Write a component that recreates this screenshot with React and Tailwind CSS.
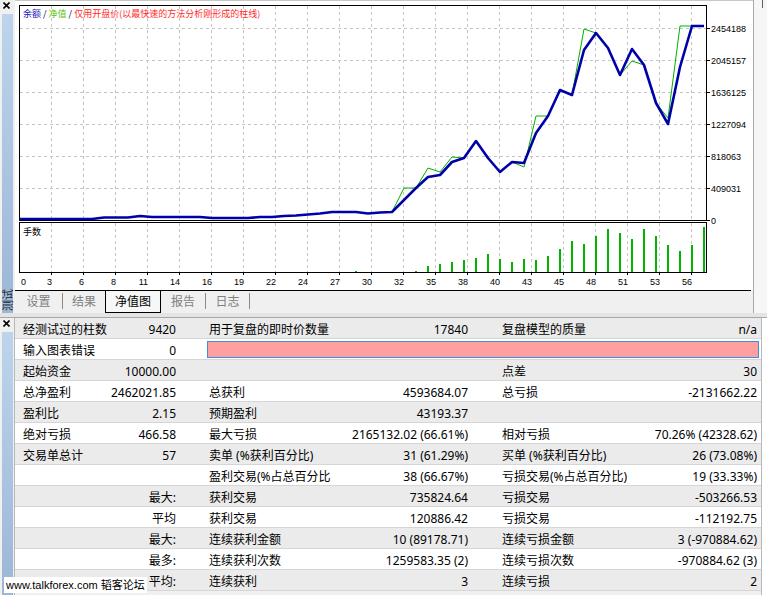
import React from "react"

// balance / equity curve, y in px, one point per trade (x = 20 + 12*i)
const BAL = [
  219, 219, 219, 219, 219, 219, 219, 217.5, 217.5, 217.5, 216, 217, 217, 217, 217, 217, 218, 218, 218, 218,
  217, 217, 216, 215.5, 214.5, 213.5, 212, 212, 212, 213.5, 212.5, 212, 200, 188, 177, 175, 162, 158, 141, 158,
  172, 162, 163, 133, 116, 90, 95, 50, 33, 48, 75, 49, 65, 103, 124, 67, 26, 26,
]
const EQ_DIFF = { 32: 188, 33: 188, 34: 168, 35: 172, 36: 157, 42: 167, 43: 116, 44: 116, 47: 29, 51: 61, 54: 118, 55: 26 }
const EQ = BAL.map((y, i) => EQ_DIFF[i] ?? y)

const LOTS = {
  28: 271, 33: 271, 34: 266, 35: 264, 36: 262, 37: 260, 38: 258, 39: 254, 40: 259, 41: 262, 42: 259, 43: 260,
  44: 256, 45: 249, 46: 241, 47: 244, 48: 236, 49: 229, 50: 233, 51: 239, 52: 229, 53: 236, 54: 245,
  55: 251, 56: 245, 57: 227,
}

const X_LABELS = ["3", "6", "8", "11", "14", "16", "19", "22", "24", "27", "30", "32", "35", "38", "40", "43", "45", "48", "51", "53", "56"]
const Y_LABELS = [
  ["2454188", 28], ["2045157", 60], ["1636125", 92], ["1227094", 124], ["818063", 156], ["409031", 188], ["0", 220],
]

const px = (i) => 20 + 12 * i
const pts = (arr) => arr.map((y, i) => `${px(i)},${y}`).join(" ")

const ROWS = [
  ["经测试过的柱数", "9420", "用于复盘的即时价数量", "17840", "复盘模型的质量", "n/a"],
  ["输入图表错误", "0", null],
  ["起始资金", "10000.00", "", "", "点差", "30"],
  ["总净盈利", "2462021.85", "总获利", "4593684.07", "总亏损", "-2131662.22"],
  ["盈利比", "2.15", "预期盈利", "43193.37", "", ""],
  ["绝对亏损", "466.58", "最大亏损", "2165132.02 (66.61%)", "相对亏损", "70.26% (42328.62)"],
  ["交易单总计", "57", "卖单 (%获利百分比)", "31 (61.29%)", "买单 (%获利百分比)", "26 (73.08%)"],
  ["", "", "盈利交易(%占总百分比", "38 (66.67%)", "亏损交易(%占总百分比)", "19 (33.33%)"],
  ["", "最大:", "获利交易", "735824.64", "亏损交易", "-503266.53"],
  ["", "平均", "获利交易", "120886.42", "亏损交易", "-112192.75"],
  ["", "最大:", "连续获利金额", "10 (89178.71)", "连续亏损金额", "3 (-970884.62)"],
  ["", "最多:", "连续获利次数", "1259583.35 (2)", "连续亏损次数", "-970884.62 (3)"],
  ["", "平均:", "连续获利", "3", "连续亏损", "2"],
]

function CloseX() {
  return (
    <svg width="7" height="7" viewBox="0 0 7 7" className="block">
      <path d="M0.5 0.5L6.5 6.5M6.5 0.5L0.5 6.5" stroke="#000" strokeWidth="1.6" />
    </svg>
  )
}

function Chart() {
  return (
    <svg width="738" height="290" viewBox="15 0 738 290" className="block">
      <rect x="15" y="0" width="738" height="290" fill="#fff" />
      <line x1="15" y1="0.5" x2="753" y2="0.5" stroke="#c8c8c8" />

      {/* grid */}
      <g stroke="#c4c4c4" strokeDasharray="3 3" shapeRendering="crispEdges">
        {Y_LABELS.slice(0, 6).map(([, y]) => (
          <line key={y} x1="20" y1={y + 0.5} x2="706" y2={y + 0.5} />
        ))}
        {X_LABELS.map((_, k) => (
          <g key={k}>
            <line x1={51.5 + 32 * k} y1="6" x2={51.5 + 32 * k} y2="220" />
            <line x1={51.5 + 32 * k} y1="223" x2={51.5 + 32 * k} y2="272" />
          </g>
        ))}
      </g>

      {/* frames */}
      <g fill="none" stroke="#000" shapeRendering="crispEdges">
        <rect x="19.5" y="5.5" width="687" height="215" />
        <rect x="19.5" y="222.5" width="687" height="50" />
        {Y_LABELS.map(([, y]) => (
          <line key={y} x1="707" y1={y + 0.5} x2="710" y2={y + 0.5} />
        ))}
        {X_LABELS.map((_, k) => (
          <line key={k} x1={51.5 + 32 * k} y1="273" x2={51.5 + 32 * k} y2="275" />
        ))}
      </g>

      {/* legend */}
      <text x="23" y="17" fontSize="9" fontFamily="Noto Sans CJK SC, sans-serif">
        <tspan fill="#2020b8">余额</tspan>
        <tspan fill="#000060"> / </tspan>
        <tspan fill="#5cc400">净值</tspan>
        <tspan fill="#000060"> / </tspan>
        <tspan fill="#ff2a2a">仅用开盘价(以最快速的方法分析刚形成的柱线)</tspan>
      </text>
      <text x="23" y="235" fontSize="9" fill="#000" fontFamily="Noto Sans CJK SC, sans-serif">手数</text>

      {/* curves */}
      <polyline points={pts(EQ)} fill="none" stroke="#00b000" strokeWidth="1" />
      <polyline points={pts(BAL)} fill="none" stroke="#0000a8" strokeWidth="2.6" strokeLinejoin="round" />

      {/* lots */}
      <g fill="#00b400" shapeRendering="crispEdges">
        {Object.entries(LOTS).map(([i, top]) => (
          <rect key={i} x={px(+i) - 1} y={top} width="2" height={272 - top} />
        ))}
      </g>

      {/* axis labels */}
      <g fontSize="9" fill="#000" fontFamily="Liberation Sans, Arial, sans-serif">
        {Y_LABELS.map(([t, y]) => (
          <text key={t} x="711" y={y + 3.5}>{t}</text>
        ))}
        <text x="21" y="285">0</text>
        {X_LABELS.map((t, k) => (
          <text key={k} x={52 + 32 * k} y="285" textAnchor="end">{t}</text>
        ))}
      </g>
    </svg>
  )
}

function Tab({ w, children }) {
  return (
    <div className={`${w} flex h-[22px] items-center justify-center text-[#808080]`}>{children}</div>
  )
}

function Sep() {
  return <div className="mt-[2px] h-[16px] w-px bg-[#8a8a8a]" />
}

function Row({ r, shade }) {
  const [a, av, b, bv, c, cv] = r
  return (
    <div
      className={`flex h-[21px] items-center border-b border-[#d6d6d6] pt-[4px] ${shade ? "bg-[#ebebeb]" : "bg-white"}`}
    >
      <div className="flex w-[165px] justify-between pl-[8px] pr-[4px]">
        <span>{a}</span>
        <span>{av}</span>
      </div>
      {b === null ? (
        <div className="-mt-[4px] ml-[27px] h-[17px] w-[552px] border border-[#3d8ee0] bg-[#ffa0a0]" />
      ) : (
        <>
          <div className="flex w-[292px] justify-between pl-[29px] pr-[4px]">
            <span>{b}</span>
            <span>{bv}</span>
          </div>
          <div className="flex w-[289px] justify-between pl-[30px] pr-[4px]">
            <span>{c}</span>
            <span>{cv}</span>
          </div>
        </>
      )}
    </div>
  )
}

export default function App() {
  return (
    <div className="relative flex h-[595px] w-[767px] flex-col overflow-hidden bg-[#f0f0f0] font-['Noto_Sans','Noto_Sans_CJK_SC',sans-serif] text-[12px] leading-none text-black">
      {/* Top: equity chart panel */}
      <div className="flex h-[313px]">
        <div className="flex w-[15px] flex-col items-start">
          <div className="ml-[3px] mt-[2px]">
            <CloseX />
          </div>
          <div className="ml-[2px] mt-[5px] flex w-[11px] flex-1 flex-col items-center justify-end bg-linear-to-b from-[#bdd4ec] to-[#9cb6d6]">
            <span className="mb-[2px] rotate-180 text-[11px] leading-[11px] text-[#1c1c1c] [text-orientation:sideways] [writing-mode:vertical-rl]">
              测试
            </span>
          </div>
        </div>

        <div className="flex w-[738px] flex-col">
          <Chart />
          <div className="flex h-[23px] w-[736px] border-t border-black bg-[#f0f0f0]">
            <Tab w="w-[47px]">设置</Tab>
            <Sep />
            <Tab w="w-[42px]">结果</Tab>
            <div className="flex h-[22px] w-[56px] items-center justify-center border-x border-b border-black bg-[#f7f7f7] text-black">
              净值图
            </div>
            <Tab w="w-[44px]">报告</Tab>
            <Sep />
            <Tab w="w-[43px]">日志</Tab>
            <Sep />
          </div>
        </div>

        <div className="relative w-[14px] border-l border-[#a8a8a8] bg-[#f6f6f6]">
          <div className="absolute left-[8px] top-0 h-[8px] w-px bg-[#606060]" />
        </div>
      </div>

      {/* divider */}
      <div className="h-[5px] border-b border-[#a8a8a8] bg-[#e4e4e4]" />

      {/* Bottom: report table */}
      <div className="flex flex-1">
        <div className="flex w-[15px] flex-col items-start border-r border-[#b8b8b8]">
          <div className="ml-[3px] mt-[2px]">
            <CloseX />
          </div>
          <div className="ml-[2px] mt-[5px] w-[11px] flex-1 bg-linear-to-b from-[#bdd4ec] to-[#9cb6d6]" />
        </div>
        <div className="w-[746px] whitespace-nowrap">
          {ROWS.map((r, i) => (
            <Row key={i} r={r} shade={i % 2 === 0} />
          ))}
        </div>
        <div className="flex-1 border-l border-[#b8b8b8] bg-white" />
      </div>

      {/* watermark */}
      <div className="absolute left-[4px] top-[577px] h-[16px] bg-white px-[2px] font-['Liberation_Sans','Noto_Sans_CJK_SC',sans-serif] text-[11px] leading-[16px] text-black">
        www.talkforex.com 韬客论坛
      </div>
    </div>
  )
}
